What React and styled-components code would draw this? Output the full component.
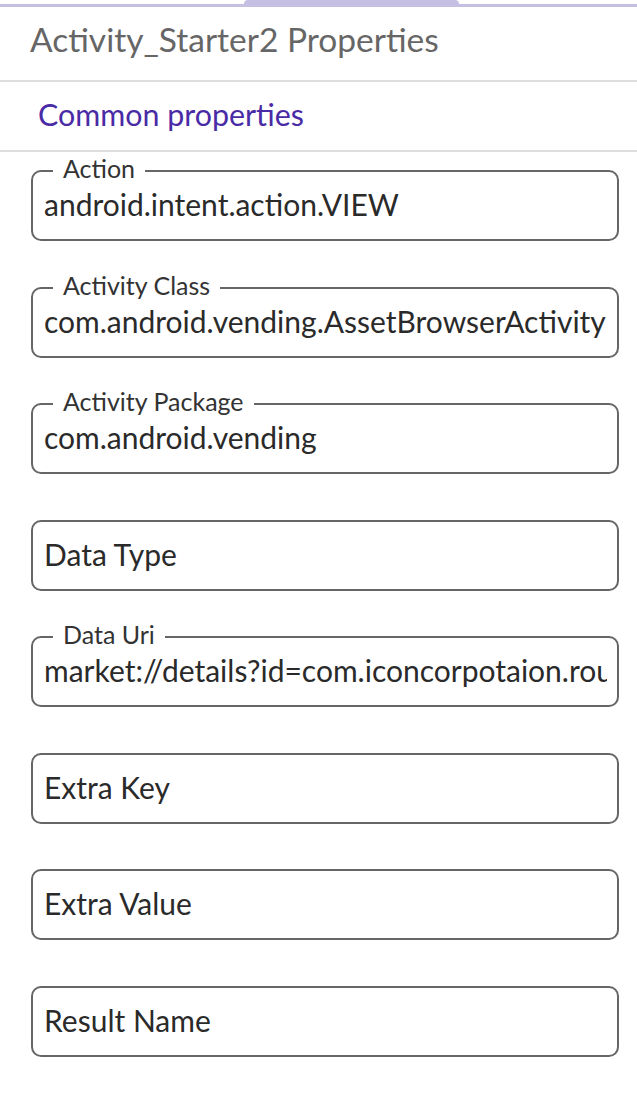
import styled, { createGlobalStyle } from 'styled-components';

const GlobalStyle = createGlobalStyle`
  html, body {
    margin: 0;
    padding: 0;
    background: #FFFFFF;
  }
  body {
    font-family: Lato, "Noto Sans", sans-serif;
  }
`;

const fields = [
  { label: 'Action', value: 'android.intent.action.VIEW' },
  { label: 'Activity Class', value: 'com.android.vending.AssetBrowserActivity' },
  { label: 'Activity Package', value: 'com.android.vending' },
  { label: 'Data Type', value: '' },
  { label: 'Data Uri', value: 'market://details?id=com.iconcorpotaion.roundup' },
  { label: 'Extra Key', value: '' },
  { label: 'Extra Value', value: '' },
  { label: 'Result Name', value: '' },
];

const Panel = styled.div`
  width: 637px;
  min-height: 1098px;
  background: #FFFFFF;
`;

const TabStrip = styled.div`
  height: 4px;
  border-bottom: 3px solid #C5BFE3;
  display: flex;
`;

const ActiveTab = styled.div`
  margin-left: 244px;
  width: 215px;
  height: 4px;
  background: #C5BFE3;
  border-radius: 4px 4px 0 0;
`;

const PanelTitle = styled.div`
  height: 75px;
  display: flex;
  align-items: center;
  padding-left: 30px;
  padding-bottom: 10px;
  box-sizing: border-box;
  border-bottom: 2px solid #DEDEDE;
  font-size: 33.5px;
  color: #666666;
`;

const SectionTitle = styled.div`
  height: 70px;
  display: flex;
  align-items: center;
  padding-left: 38px;
  padding-bottom: 4px;
  box-sizing: border-box;
  border-bottom: 2px solid #DEDEDE;
  font-size: 30.4px;
  color: #4A2BA6;
`;

const FieldList = styled.div`
  display: flex;
  flex-direction: column;
  gap: 33.5px;
  padding: 6px 18px 0 31px;
`;

const Field = styled.fieldset`
  display: block;
  margin: 0;
  height: 83px;
  box-sizing: border-box;
  padding: 0 10px 0 11px;
  border: 2px solid #666666;
  border-radius: 10px;
  min-width: 0;
`;

const Legend = styled.legend`
  margin-left: 9px;
  height: 26px;
  box-sizing: border-box;
  padding: ${p => (p.$hidden ? '0' : '0 10px 6px')};
  width: ${p => (p.$hidden ? '0' : 'auto')};
  font-size: 25px;
  line-height: 20px;
  color: #333333;
  white-space: nowrap;
`;

const Value = styled.div`
  line-height: 40px;
  font-size: 30px;
  color: #2A2A2A;
  white-space: nowrap;
  overflow: hidden;
`;

export default function App() {
  return (
    <Panel>
      <GlobalStyle />
      <TabStrip>
        <ActiveTab />
      </TabStrip>
      <PanelTitle>Activity_Starter2 Properties</PanelTitle>
      <SectionTitle>Common properties</SectionTitle>
      <FieldList>
        {fields.map(f => (
          <Field key={f.label}>
            <Legend $hidden={!f.value}>{f.value ? f.label : null}</Legend>
            <Value>{f.value || f.label}</Value>
          </Field>
        ))}
      </FieldList>
    </Panel>
  );
}
